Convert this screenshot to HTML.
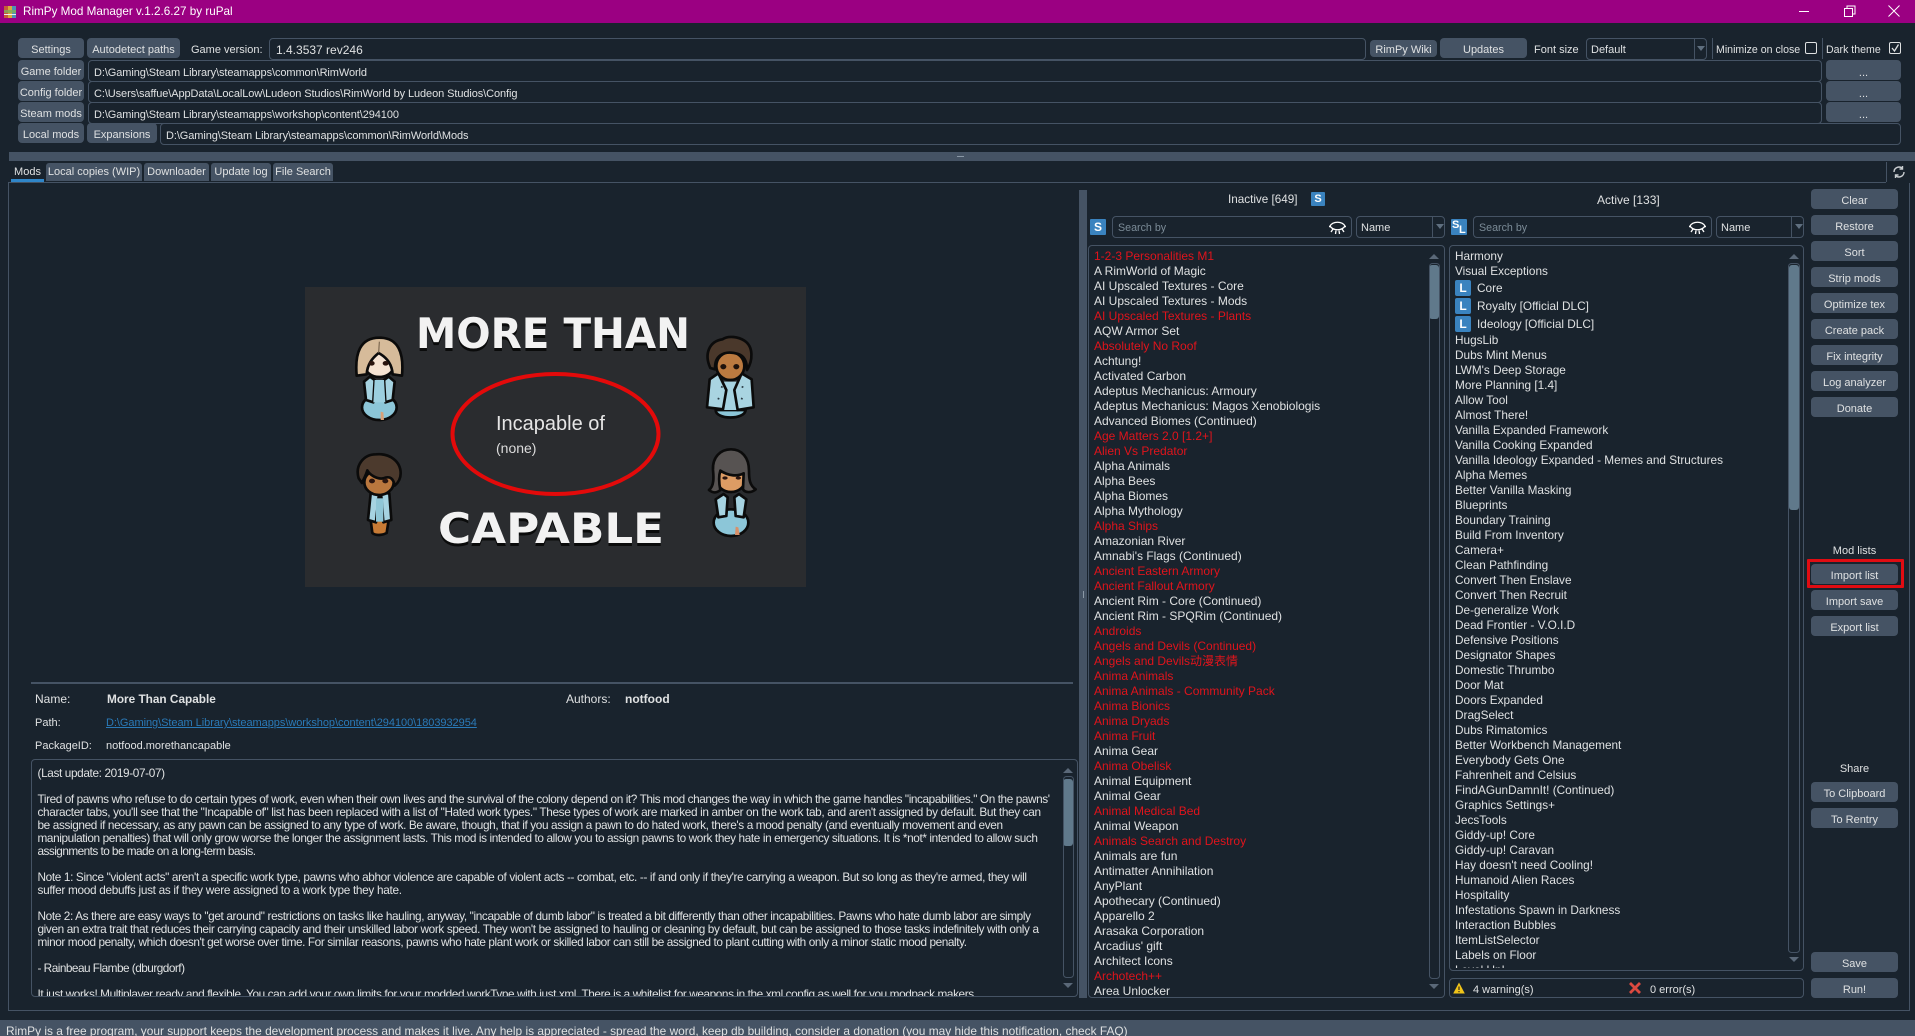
<!DOCTYPE html>
<html><head><meta charset="utf-8"><title>RimPy Mod Manager</title>
<style>
*{box-sizing:border-box}
html,body{margin:0;padding:0;width:1915px;height:1036px;overflow:hidden;background:#19232d}
body{position:relative;font:12px/16px "Liberation Sans","Noto Sans CJK SC",sans-serif;color:#dfe1e2}
.a,.t,.b,.i,.ln{position:absolute}
.t{white-space:nowrap}
.b{background:#455364;border-radius:4px;text-align:center;white-space:nowrap;color:#dfe1e2;font-size:11px;padding-top:2px}
.i{border:1px solid #455364;border-radius:4px;white-space:nowrap;padding-left:5px;overflow:hidden}
.p{font-size:11px;letter-spacing:-.09px;line-height:24px}
.f{font-size:11px}
.ln{background:#455364}
.list{position:absolute;white-space:nowrap;overflow:hidden}
.list div{height:15px;line-height:15px}
.list div.r{color:#e0141c}
.list div.l{height:18px;line-height:18px;padding-left:22px;position:relative}
.list div.l:before{content:"L";position:absolute;left:0;top:1px;width:16px;height:16px;background:#3a83bf;border-radius:2px;color:#fff;font-weight:bold;font-size:12px;line-height:16px;text-align:center}
.s{position:absolute;background:#3a83bf;border-radius:1px;color:#fff;font-weight:bold;text-align:center;width:16px;height:16px;line-height:16px;font-size:12px}
.tab{position:absolute;top:163px;height:18px;line-height:19px;background:#455364;text-align:center;border-radius:3px 3px 0 0;white-space:nowrap;font-size:11px}
.ph{color:#7b8b97;font-size:10.700px}
a{color:#2a7ab8}
</style></head>
<body>
<!-- title bar -->
<div class="a" style="left:0;top:0;width:1915px;height:23px;background:#9b0082"></div>
<svg class="a" style="left:4px;top:5px" width="12" height="14"><rect x="0" y="1" width="4" height="12" fill="#c65b3a"/><rect x="4" y="1" width="4" height="12" fill="#d9a93a"/><rect x="8" y="1" width="4" height="12" fill="#4e8fb5"/><rect x="0" y="5" width="12" height="3" fill="#7fae5b" opacity=".8"/><rect x="0" y="9" width="12" height="1" fill="#eee"/></svg>
<div class="t" style="left:23px;top:4px;color:#fff;font-size:11.700px">RimPy Mod Manager v.1.2.6.27 by ruPal</div>
<svg class="a" style="left:1795px;top:0" width="115" height="23" fill="none" stroke="#fff" stroke-width="1"><path d="M4 11.500H14"/><path d="M49.500 8.500h8v8h-8zM52 8.500V6h8v8h-2.500"/><path d="M93.500 5.500l11 11M104.500 5.500l-11 11"/></svg>

<!-- top rows -->
<div class="b" style="left:18px;top:38px;width:66px;height:20px;line-height:20px">Settings</div>
<div class="b" style="left:87px;top:38px;width:93px;height:20px;line-height:20px">Autodetect paths</div>
<div class="t f" style="left:191px;top:42px">Game version:</div>
<div class="i" style="left:269px;top:38px;width:1097px;height:22px;line-height:22px;padding-left:6px">1.4.3537 rev246</div>
<div class="b" style="left:1370px;top:40px;width:67px;height:17px;line-height:16px">RimPy Wiki</div>
<div class="b" style="left:1440px;top:38px;width:87px;height:20px;line-height:20px">Updates</div>
<div class="t f" style="left:1534px;top:42px">Font size</div>
<div class="i f" style="left:1586px;top:38px;width:121px;height:22px;line-height:22px;padding-left:4px">Default</div>
<div class="ln" style="left:1694px;top:39px;width:1px;height:20px"></div>
<svg class="a" style="left:1696px;top:46px" width="10" height="6"><path d="M1 0h8L5 5z" fill="#5f6f7f"/></svg>
<div class="ln" style="left:1712px;top:38px;width:1px;height:21px"></div>
<div class="t" style="left:1716px;top:42px;font-size:10.600px">Minimize on close</div>
<div class="a" style="left:1805px;top:42px;width:12px;height:12px;border:1px solid #dfe1e2;border-radius:2px"></div>
<div class="ln" style="left:1822px;top:38px;width:1px;height:21px"></div>
<div class="t" style="left:1826px;top:42px;font-size:10.600px">Dark theme</div>
<div class="a" style="left:1889px;top:42px;width:12px;height:12px;border:1px solid #dfe1e2;border-radius:2px"></div>
<svg class="a" style="left:1889px;top:42px" width="12" height="12" fill="none" stroke="#dfe1e2" stroke-width="1.300"><path d="M3 6l2.500 3L9.500 2.500"/></svg>

<div class="b" style="left:18px;top:60px;width:66px;height:20px;line-height:20px">Game folder</div>
<div class="i p" style="left:88px;top:60px;width:1734px;height:22px">D:\Gaming\Steam Library\steamapps\common\RimWorld</div>
<div class="b" style="left:1826px;top:60px;width:75px;height:20px;line-height:22px">...</div>
<div class="b" style="left:18px;top:81px;width:66px;height:20px;line-height:20px">Config folder</div>
<div class="i p" style="left:88px;top:81px;width:1734px;height:22px">C:\Users\saffue\AppData\LocalLow\Ludeon Studios\RimWorld by Ludeon Studios\Config</div>
<div class="b" style="left:1826px;top:81px;width:75px;height:20px;line-height:22px">...</div>
<div class="b" style="left:18px;top:102px;width:66px;height:20px;line-height:20px">Steam mods</div>
<div class="i p" style="left:88px;top:102px;width:1734px;height:22px">D:\Gaming\Steam Library\steamapps\workshop\content\294100</div>
<div class="b" style="left:1826px;top:102px;width:75px;height:20px;line-height:22px">...</div>
<div class="b" style="left:18px;top:123px;width:66px;height:20px;line-height:20px">Local mods</div>
<div class="b" style="left:87px;top:123px;width:70px;height:20px;line-height:20px">Expansions</div>
<div class="i p" style="left:160px;top:123px;width:1741px;height:22px">D:\Gaming\Steam Library\steamapps\common\RimWorld\Mods</div>

<!-- splitter -->
<div class="ln" style="left:9px;top:152px;width:1906px;height:9px"></div>
<div class="a" style="left:957px;top:156px;width:7px;height:1px;background:#8a98a6"></div>

<!-- tabs -->
<div class="tab" style="left:11px;width:33px;background:#19232d;height:19px">Mods<div class="a" style="left:0;top:16px;width:33px;height:3px;background:#2f86c9"></div></div>
<div class="tab" style="left:46px;width:96px">Local copies (WIP)</div>
<div class="tab" style="left:144px;width:65px">Downloader</div>
<div class="tab" style="left:211px;width:60px">Update log</div>
<div class="tab" style="left:273px;width:60px">File Search</div>
<div class="ln" style="left:8px;top:182px;width:1878px;height:1px"></div>
<div class="ln" style="left:1886px;top:162px;width:1px;height:20px"></div>
<svg class="a" style="left:1892px;top:165px" width="14" height="14" fill="none" stroke="#c9cdd0" stroke-width="1.400"><path d="M2 7a5 5 0 0 1 8.500-3.500"/><path d="M12 7a5 5 0 0 1-8.500 3.500"/><path d="M10.500 1v3h-3M3.500 13v-3h3"/></svg>
<div class="ln" style="left:8px;top:182px;width:1px;height:829px"></div>
<div class="ln" style="left:8px;top:1010px;width:1902px;height:1px"></div>
<div class="ln" style="left:1909px;top:183px;width:1px;height:828px"></div>

<!-- preview image -->
<svg class="a" style="left:305px;top:287px" width="501" height="300" viewBox="305 287 501 300" font-family="'Liberation Sans',sans-serif">
<rect x="305" y="287" width="501" height="300" fill="#2a2c2f"/>
<g font-weight="bold" font-size="42" font-family="'DejaVu Sans',sans-serif">
<text x="416" y="351" textLength="274" lengthAdjust="spacingAndGlyphs" fill="#000" opacity=".75">MORE THAN</text>
<text x="416" y="348" textLength="274" lengthAdjust="spacingAndGlyphs" fill="#f2f2f2">MORE THAN</text>
<text x="438" y="546" textLength="226" lengthAdjust="spacingAndGlyphs" fill="#000" opacity=".75">CAPABLE</text>
<text x="438" y="543" textLength="226" lengthAdjust="spacingAndGlyphs" fill="#f2f2f2">CAPABLE</text>
</g>
<ellipse cx="555.500" cy="434" rx="103" ry="60" fill="none" stroke="#e30a0a" stroke-width="4"/>
<text x="496" y="430" font-size="20" fill="#e6e6e6">Incapable of</text>
<text x="496" y="453" font-size="14" fill="#dcdcdc">(none)</text>

<!-- pawn 1 -->
<g transform="translate(340 325) scale(.3333)" stroke="#0b0b0b" stroke-width="8" stroke-linejoin="round">
<ellipse cx="118" cy="247" rx="52" ry="38" fill="#8cc6d8"/>
<path d="M90 155L72 170L78 225L100 232L104 165ZM146 155L164 170L158 225L136 232L132 165Z" fill="#a6d3e1"/>
<path d="M104 165L132 165L136 232L100 232Z" fill="#9ccfdf" stroke="none"/>
<ellipse cx="118" cy="120" rx="44" ry="36" fill="#f5e3d3"/>
<path d="M50 152C44 85 60 38 118 38C176 38 192 85 186 152L158 148C156 120 144 100 116 84C96 100 82 118 80 148Z" fill="#d6bb9a"/>
<path d="M118 50L116 84" stroke="#6d5a44" stroke-width="3" fill="none"/>
<g stroke="none" fill="#2a1510"><ellipse cx="95" cy="115" rx="9" ry="7"/><ellipse cx="137" cy="115" rx="9" ry="7"/></g>
<path d="M122 260L130 262L132 285L122 285Z" fill="#d8a078" stroke="none"/>
</g>
<!-- pawn 2 -->
<g transform="translate(340 445) scale(.3333)" stroke="#0b0b0b" stroke-width="8" stroke-linejoin="round">
<path d="M92 225L146 225L140 264C125 272 105 272 97 264Z" fill="#c87b35"/>
<path d="M92 145L84 225L108 232L116 155L124 155L130 232L154 225L148 145Z" fill="#a6d3e1"/>
<path d="M108 160L130 160L130 230L108 230Z" fill="#8fc6d6" stroke="none"/>
<ellipse cx="117" cy="112" rx="44" ry="38" fill="#b9773e"/>
<path d="M56 100C44 60 72 28 108 28C150 24 182 50 182 85C182 100 176 112 164 122C160 100 150 92 130 100C110 104 88 88 82 76C78 90 72 100 66 114Z" fill="#4c3a2d"/>
<g stroke="none" fill="#2a1510"><ellipse cx="96" cy="108" rx="9" ry="7"/><ellipse cx="136" cy="108" rx="9" ry="7"/></g>
</g>
<!-- pawn 3 -->
<g transform="translate(695 330) scale(.3333)" stroke="#0b0b0b" stroke-width="8" stroke-linejoin="round">
<path d="M62 240C62 270 150 270 152 240Z" fill="#8cc6d8"/>
<path d="M80 155L135 155L145 240L70 240Z" fill="#a6d3e1" stroke="none"/>
<path d="M70 130L44 148L36 232L84 238L94 180ZM140 130L170 148L176 232L128 240L118 180Z" fill="#a9d4e1"/>
<ellipse cx="106" cy="108" rx="42" ry="42" fill="#bb7a40"/>
<path d="M46 114C26 70 44 34 82 28C100 16 130 20 148 32C176 50 174 92 156 120C156 96 148 78 130 72C110 66 90 66 76 76C62 86 60 100 60 118Z" fill="#4a382b"/>
<g stroke="none" fill="#1f120c"><ellipse cx="85" cy="110" rx="9" ry="8"/><ellipse cx="124" cy="110" rx="9" ry="8"/></g>
<path d="M68 205l5 2M78 170l5 2M138 205l5 2M140 170l5 2" stroke="#2a3a44" stroke-width="5"/>
</g>
<!-- pawn 4 -->
<g transform="translate(695 440) scale(.3333)" stroke="#0b0b0b" stroke-width="8" stroke-linejoin="round">
<ellipse cx="108" cy="248" rx="52" ry="40" fill="#8cc6d8"/>
<path d="M86 162L62 178L70 232L94 228L98 172ZM132 162L154 178L146 232L122 228L118 172Z" fill="#a6d3e1"/>
<ellipse cx="108" cy="120" rx="42" ry="36" fill="#dd9c64"/>
<path d="M42 150C58 138 56 110 54 90C52 52 76 28 108 28C140 28 162 52 162 92C162 118 164 136 182 148C168 160 150 158 144 148L146 100C128 110 100 108 76 92C70 110 72 130 76 150C64 160 54 160 42 150Z" fill="#575352"/>
<g stroke="none" fill="#2a1510"><ellipse cx="90" cy="114" rx="8" ry="5"/><ellipse cx="130" cy="114" rx="8" ry="5"/></g>
<path d="M122 260L130 262L134 285L120 285Z" fill="#d8906a" stroke="none"/>
</g>
</svg>

<!-- mod info -->
<div class="ln" style="left:31px;top:682px;width:1042px;height:2px"></div>
<div class="t" style="left:35px;top:691px">Name:</div>
<div class="t" style="left:107px;top:691px;font-weight:bold;font-size:11.800px">More Than Capable</div>
<div class="t" style="left:566px;top:691px">Authors:</div>
<div class="t" style="left:625px;top:691px;font-weight:bold">notfood</div>
<div class="t f" style="left:35px;top:715px">Path:</div>
<div class="t f" style="left:106px;top:715px;letter-spacing:-.05px"><a style="text-decoration:underline">D:\Gaming\Steam Library\steamapps\workshop\content\294100\1803932954</a></div>
<div class="t f" style="left:35px;top:738px">PackageID:</div>
<div class="t f" style="left:106px;top:738px">notfood.morethancapable</div>
<div class="i" style="left:31px;top:759px;width:1047px;height:238px;padding:0"></div>

<svg class="a" style="left:0;top:0;pointer-events:none" width="1915" height="1036" font-family="'Liberation Sans',sans-serif" font-size="11.800" fill="#dfe1e2">
<defs><clipPath id="dc"><rect x="32" y="760" width="1030" height="236"/></clipPath></defs>
<g clip-path="url(#dc)">
<text x="37.500" y="777" textLength="127.500">(Last update: 2019-07-07)</text>
<text x="37.500" y="803" textLength="1012.500">Tired of pawns who refuse to do certain types of work, even when their own lives and the survival of the colony depend on it? This mod changes the way in which the game handles "incapabilities." On the pawns'</text>
<text x="37.500" y="816" textLength="1003.500">character tabs, you'll see that the "Incapable of" list has been replaced with a list of "Hated work types." These types of work are marked in amber on the work tab, and aren't assigned by default. But they can</text>
<text x="37.500" y="829" textLength="965.500">be assigned if necessary, as any pawn can be assigned to any type of work. Be aware, though, that if you assign a pawn to do hated work, there's a mood penalty (and eventually movement and even</text>
<text x="37.500" y="842" textLength="1000.500">manipulation penalties) that will only grow worse the longer the assignment lasts. This mod is intended to allow you to assign pawns to work they hate in emergency situations. It is *not* intended to allow such</text>
<text x="37.500" y="855" textLength="218.500">assignments to be made on a long-term basis.</text>
<text x="37.500" y="881" textLength="989.500">Note 1: Since "violent acts" aren't a specific work type, pawns who abhor violence are capable of violent acts -- combat, etc. -- if and only if they're carrying a weapon. But so long as they're armed, they will</text>
<text x="37.500" y="894" textLength="364.500">suffer mood debuffs just as if they were assigned to a work type they hate.</text>
<text x="37.500" y="920" textLength="993.500">Note 2: As there are easy ways to "get around" restrictions on tasks like hauling, anyway, "incapable of dumb labor" is treated a bit differently than other incapabilities. Pawns who hate dumb labor are simply</text>
<text x="37.500" y="933" textLength="1001.500">given an extra trait that reduces their carrying capacity and their unskilled labor work speed. They won't be assigned to hauling or cleaning by default, but can be assigned to those tasks indefinitely with only a</text>
<text x="37.500" y="946" textLength="929.500">minor mood penalty, which doesn't get worse over time. For similar reasons, pawns who hate plant work or skilled labor can still be assigned to plant cutting with only a minor static mood penalty.</text>
<text x="37.500" y="972" textLength="147.500">- Rainbeau Flambe (dburgdorf)</text>
<text x="37.500" y="998" textLength="939.500">It just works! Multiplayer ready and flexible. You can add your own limits for your modded workType with just xml. There is a whitelist for weapons in the xml config as well for you modpack makers.</text>
</g>
<!-- arrows and scrollbars -->
<g fill="#5a6878">
<path d="M1063 773l5-5 5 5z"/><path d="M1063 983l5 5 5-5z"/>
<path d="M1429 259l5-5 5 5z"/><path d="M1429 984l5 5 5-5z"/>
<path d="M1789 259l5-5 5 5z"/><path d="M1789 957l5 5 5-5z"/>
</g>
<g fill="#60798b">
<rect x="1063" y="779" width="10" height="67" rx="3"/>
<rect x="1429" y="265" width="10" height="54" rx="3"/>
<rect x="1789" y="265" width="10" height="245" rx="3"/>
</g>
<g fill="none" stroke="#455364">
<rect x="1063.500" y="776.500" width="10" height="201" rx="3"/>
<rect x="1429.500" y="263.500" width="10" height="715" rx="3"/>
<rect x="1788.500" y="263.500" width="11" height="689" rx="3"/>
</g>
</svg>

<!-- vertical splitter -->
<div class="ln" style="left:1079px;top:190px;width:8px;height:808px"></div>
<div class="a" style="left:1083px;top:591px;width:1px;height:7px;background:#8a98a6"></div>

<!-- list headers -->
<div class="t" style="left:1228px;top:192px;font-size:11.700px">Inactive [649]</div>
<div class="s" style="left:1311px;top:192px;width:14px;height:14px;line-height:14px;font-size:11px">S</div>
<div class="t" style="left:1597px;top:192px">Active [133]</div>
<div class="s" style="left:1090px;top:219px">S</div>
<div class="i ph" style="left:1112px;top:216px;width:240px;height:22px;line-height:22px;padding-left:5px">Search by</div>
<div class="i f" style="left:1356px;top:216px;width:89px;height:22px;line-height:22px;padding-left:4px">Name</div>
<div class="ln" style="left:1432px;top:217px;width:1px;height:20px"></div>
<svg class="a" style="left:1435px;top:224px" width="10" height="6"><path d="M1 0h8L5 5z" fill="#5f6f7f"/></svg>
<div class="s" style="left:1451px;top:219px"><span class="a" style="left:1px;top:-2px;font-size:11px">S</span><span class="a" style="left:8px;top:3px;font-size:11px">L</span></div>
<div class="i ph" style="left:1473px;top:216px;width:239px;height:22px;line-height:22px;padding-left:5px">Search by</div>
<div class="i f" style="left:1716px;top:216px;width:88px;height:22px;line-height:22px;padding-left:4px">Name</div>
<div class="ln" style="left:1791px;top:217px;width:1px;height:20px"></div>
<svg class="a" style="left:1794px;top:224px" width="10" height="6"><path d="M1 0h8L5 5z" fill="#5f6f7f"/></svg>
<svg class="a" style="left:1329px;top:221px" width="17" height="14" fill="none" stroke="#fff" stroke-width="1.300"><path d="M1 5C4 0 13 0 16 5"/><path d="M1 5C4 10 13 10 16 5"/><path d="M4 8L2 11M7 9.500L6.500 13M10 9.500L10.500 13M13 8L15 11M1 5l-1 1M16 5l1 1"/></svg>
<svg class="a" style="left:1689px;top:221px" width="17" height="14" fill="none" stroke="#fff" stroke-width="1.300"><path d="M1 5C4 0 13 0 16 5"/><path d="M1 5C4 10 13 10 16 5"/><path d="M4 8L2 11M7 9.500L6.500 13M10 9.500L10.500 13M13 8L15 11M1 5l-1 1M16 5l1 1"/></svg>

<!-- inactive list -->
<div class="i" style="left:1088px;top:245px;width:357px;height:753px;padding:0"></div>
<div class="list" style="left:1094px;top:249px;width:330px;height:748px">
<div class="r">1-2-3 Personalities M1</div>
<div>A RimWorld of Magic</div>
<div>AI Upscaled Textures - Core</div>
<div>AI Upscaled Textures - Mods</div>
<div class="r">AI Upscaled Textures - Plants</div>
<div>AQW Armor Set</div>
<div class="r">Absolutely No Roof</div>
<div>Achtung!</div>
<div>Activated Carbon</div>
<div>Adeptus Mechanicus: Armoury</div>
<div>Adeptus Mechanicus: Magos Xenobiologis</div>
<div>Advanced Biomes (Continued)</div>
<div class="r">Age Matters 2.0 [1.2+]</div>
<div class="r">Alien Vs Predator</div>
<div>Alpha Animals</div>
<div>Alpha Bees</div>
<div>Alpha Biomes</div>
<div>Alpha Mythology</div>
<div class="r">Alpha Ships</div>
<div>Amazonian River</div>
<div>Amnabi's Flags (Continued)</div>
<div class="r">Ancient Eastern Armory</div>
<div class="r">Ancient Fallout Armory</div>
<div>Ancient Rim - Core (Continued)</div>
<div>Ancient Rim - SPQRim (Continued)</div>
<div class="r">Androids</div>
<div class="r">Angels and Devils (Continued)</div>
<div class="r">Angels and Devils动漫表情</div>
<div class="r">Anima Animals</div>
<div class="r">Anima Animals - Community Pack</div>
<div class="r">Anima Bionics</div>
<div class="r">Anima Dryads</div>
<div class="r">Anima Fruit</div>
<div>Anima Gear</div>
<div class="r">Anima Obelisk</div>
<div>Animal Equipment</div>
<div>Animal Gear</div>
<div class="r">Animal Medical Bed</div>
<div>Animal Weapon</div>
<div class="r">Animals Search and Destroy</div>
<div>Animals are fun</div>
<div>Antimatter Annihilation</div>
<div>AnyPlant</div>
<div>Apothecary (Continued)</div>
<div>Apparello 2</div>
<div>Arasaka Corporation</div>
<div>Arcadius' gift</div>
<div>Architect Icons</div>
<div class="r">Archotech++</div>
<div>Area Unlocker</div>
</div>

<!-- active list -->
<div class="i" style="left:1449px;top:245px;width:355px;height:726px;padding:0"></div>
<div class="list" style="left:1455px;top:249px;width:330px;height:719px;font-size:11.800px">
<div>Harmony</div>
<div>Visual Exceptions</div>
<div class="l">Core</div>
<div class="l">Royalty [Official DLC]</div>
<div class="l">Ideology [Official DLC]</div>
<div>HugsLib</div>
<div>Dubs Mint Menus</div>
<div>LWM's Deep Storage</div>
<div>More Planning [1.4]</div>
<div>Allow Tool</div>
<div>Almost There!</div>
<div>Vanilla Expanded Framework</div>
<div>Vanilla Cooking Expanded</div>
<div>Vanilla Ideology Expanded - Memes and Structures</div>
<div>Alpha Memes</div>
<div>Better Vanilla Masking</div>
<div>Blueprints</div>
<div>Boundary Training</div>
<div>Build From Inventory</div>
<div>Camera+</div>
<div>Clean Pathfinding</div>
<div>Convert Then Enslave</div>
<div>Convert Then Recruit</div>
<div>De-generalize Work</div>
<div>Dead Frontier - V.O.I.D</div>
<div>Defensive Positions</div>
<div>Designator Shapes</div>
<div>Domestic Thrumbo</div>
<div>Door Mat</div>
<div>Doors Expanded</div>
<div>DragSelect</div>
<div>Dubs Rimatomics</div>
<div>Better Workbench Management</div>
<div>Everybody Gets One</div>
<div>Fahrenheit and Celsius</div>
<div>FindAGunDamnIt! (Continued)</div>
<div>Graphics Settings+</div>
<div>JecsTools</div>
<div>Giddy-up! Core</div>
<div>Giddy-up! Caravan</div>
<div>Hay doesn't need Cooling!</div>
<div>Humanoid Alien Races</div>
<div>Hospitality</div>
<div>Infestations Spawn in Darkness</div>
<div>Interaction Bubbles</div>
<div>ItemListSelector</div>
<div>Labels on Floor</div>
<div>Level Up!</div>
</div>

<!-- warnings -->
<div class="i" style="left:1449px;top:978px;width:355px;height:20px;padding:0"></div>
<svg class="a" style="left:1453px;top:982px" width="12" height="12"><path d="M6 .5L11.800 11.500H.2z" fill="#f0c419"/><path d="M6 4.500v3.500M6 9v1.300" stroke="#33291a" stroke-width="1.200"/></svg>
<div class="t f" style="left:1473px;top:982px">4 warning(s)</div>
<svg class="a" style="left:1629px;top:982px" width="12" height="12" stroke="#dc4a40" stroke-width="2.800"><path d="M1 1l10 10M11 1L1 11"/></svg>
<div class="t f" style="left:1650px;top:982px">0 error(s)</div>

<!-- right buttons -->
<div class="b" style="left:1811px;top:189px;width:87px;height:20px;line-height:20px">Clear</div>
<div class="b" style="left:1811px;top:215px;width:87px;height:20px;line-height:20px">Restore</div>
<div class="b" style="left:1811px;top:241px;width:87px;height:20px;line-height:20px">Sort</div>
<div class="b" style="left:1811px;top:267px;width:87px;height:20px;line-height:20px">Strip mods</div>
<div class="b" style="left:1811px;top:293px;width:87px;height:20px;line-height:20px">Optimize tex</div>
<div class="b" style="left:1811px;top:319px;width:87px;height:20px;line-height:20px">Create pack</div>
<div class="b" style="left:1811px;top:345px;width:87px;height:20px;line-height:20px">Fix integrity</div>
<div class="b" style="left:1811px;top:371px;width:87px;height:20px;line-height:20px">Log analyzer</div>
<div class="b" style="left:1811px;top:397px;width:87px;height:20px;line-height:20px">Donate</div>
<div class="t f" style="left:1811px;top:543px;width:87px;text-align:center">Mod lists</div>
<div class="b" style="left:1811px;top:564px;width:87px;height:20px;line-height:20px">Import list</div>
<div class="a" style="left:1807px;top:559px;width:97px;height:29px;border:3px solid #e00c12;border-radius:1px"></div>
<div class="b" style="left:1811px;top:590px;width:87px;height:20px;line-height:20px">Import save</div>
<div class="b" style="left:1811px;top:616px;width:87px;height:20px;line-height:20px">Export list</div>
<div class="t f" style="left:1811px;top:761px;width:87px;text-align:center">Share</div>
<div class="b" style="left:1811px;top:782px;width:87px;height:20px;line-height:20px">To Clipboard</div>
<div class="b" style="left:1811px;top:808px;width:87px;height:20px;line-height:20px">To Rentry</div>
<div class="b" style="left:1811px;top:952px;width:87px;height:20px;line-height:20px">Save</div>
<div class="b" style="left:1811px;top:978px;width:87px;height:20px;line-height:20px">Run!</div>

<!-- status bar -->
<div class="a" style="left:0;top:1020px;width:1915px;height:16px;background:#455364;overflow:hidden">
<div class="t" style="left:6px;top:3px;font-size:11.900px">RimPy is a free program, your support keeps the development process and makes it live. Any help is appreciated - spread the word, keep db building, consider a donation (you may hide this notification, check FAQ)</div>
</div>
</body></html>
